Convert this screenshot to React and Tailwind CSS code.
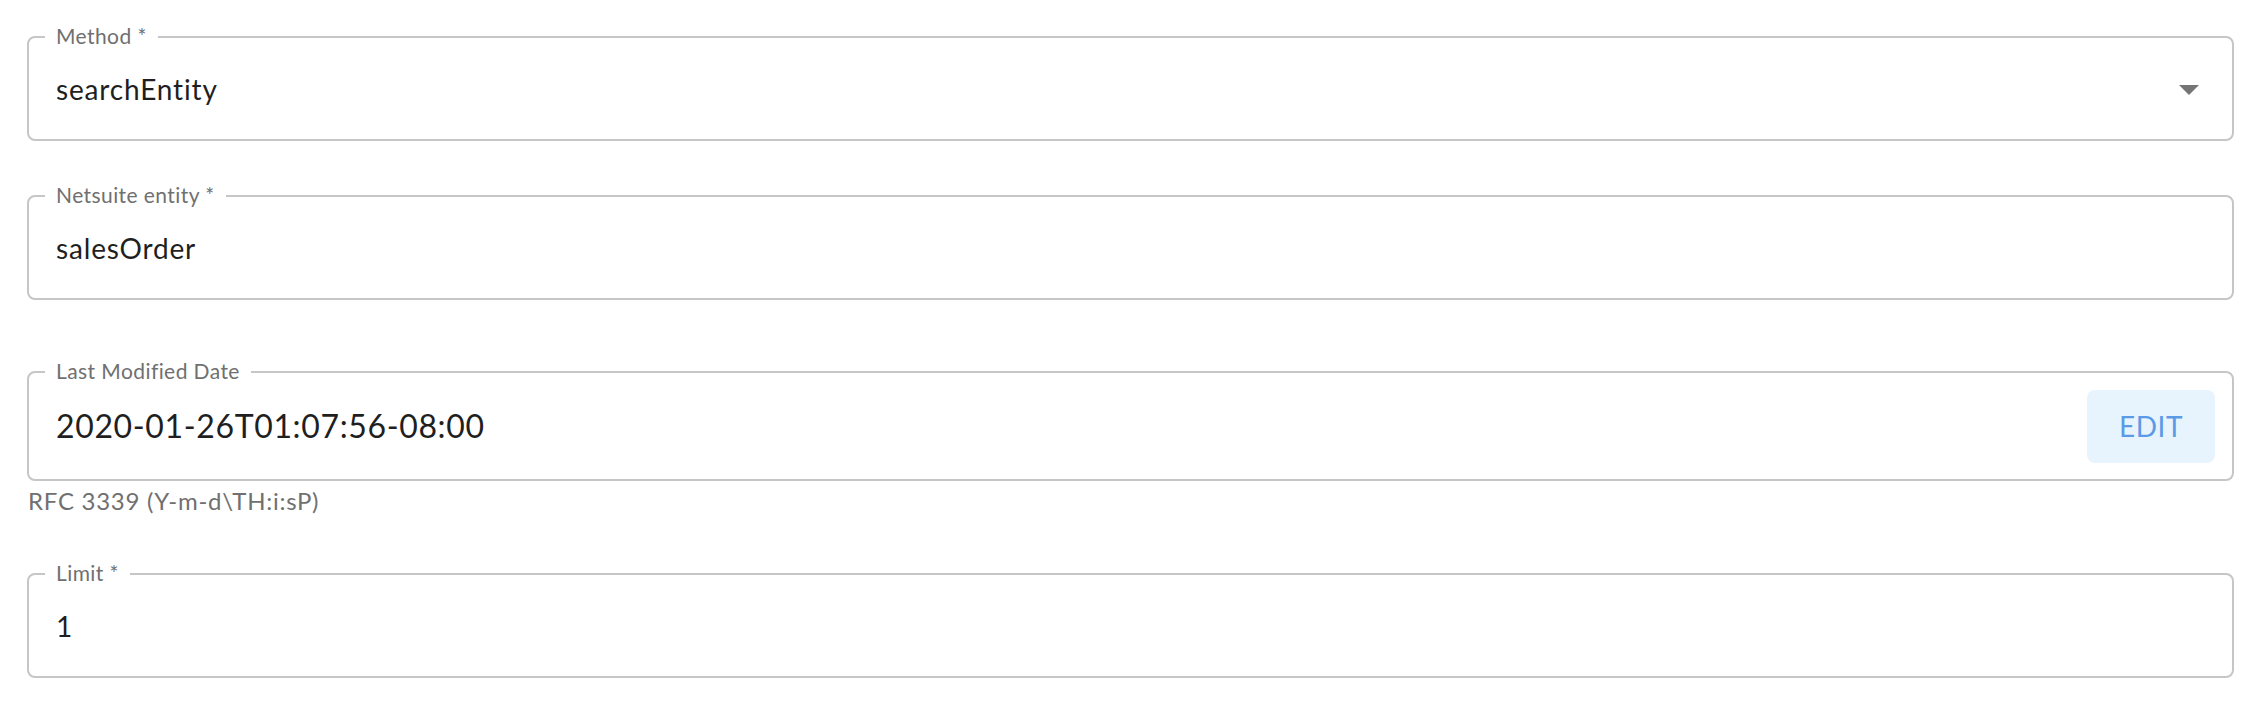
import React from "react";

const font = { fontFamily: "Lato, 'Noto Sans', sans-serif" };

function Field({ label, children, className = "", right = null }) {
  return (
    <div className={`relative flex items-center border-2 border-[#c6c6c6] rounded-[8px] pl-[27px] pr-[17px] ${className}`}>
      <span className="absolute -top-[16px] left-[16px] bg-white px-[11px] text-[21px] leading-[28px] text-[#707070] tracking-[0.02em]">
        {label}
      </span>
      <div className="flex-1 text-[#1f1f1f]">{children}</div>
      {right}
    </div>
  );
}

export default function App() {
  return (
    <div className="bg-white w-full h-[708px] pl-[27px] pr-[22px] pt-[36px]" style={font}>
      <Field
        label="Method *"
        className="h-[105px]"
        right={
          <svg width="48" height="48" viewBox="0 0 24 24" className="mr-[2px]">
            <path d="M7 10l5 5 5-5z" fill="#757575" />
          </svg>
        }
      >
        <span className="text-[28px] tracking-[0.03em]">searchEntity</span>
      </Field>

      <Field label="Netsuite entity *" className="h-[105px] mt-[54px]">
        <span className="text-[28px] tracking-[0.03em]">salesOrder</span>
      </Field>

      <Field
        label="Last Modified Date"
        className="h-[110px] mt-[71px]"
        right={
          <button className="w-[128px] h-[73px] rounded-[8px] bg-[#e8f4fd] text-[#5b9be6] text-[28px] tracking-[0.02em]">
            EDIT
          </button>
        }
      >
        <span className="text-[32px] tracking-[0.02em]">2020-01-26T01:07:56-08:00</span>
      </Field>
      <div className="pl-[1px] pt-[5px] text-[24px] leading-[30px] text-[#707070] tracking-[0.03em]">
        RFC 3339 (Y-m-d\TH:i:sP)
      </div>

      <Field label="Limit *" className="h-[105px] mt-[57px]">
        <span className="text-[28px]">1</span>
      </Field>
    </div>
  );
}
